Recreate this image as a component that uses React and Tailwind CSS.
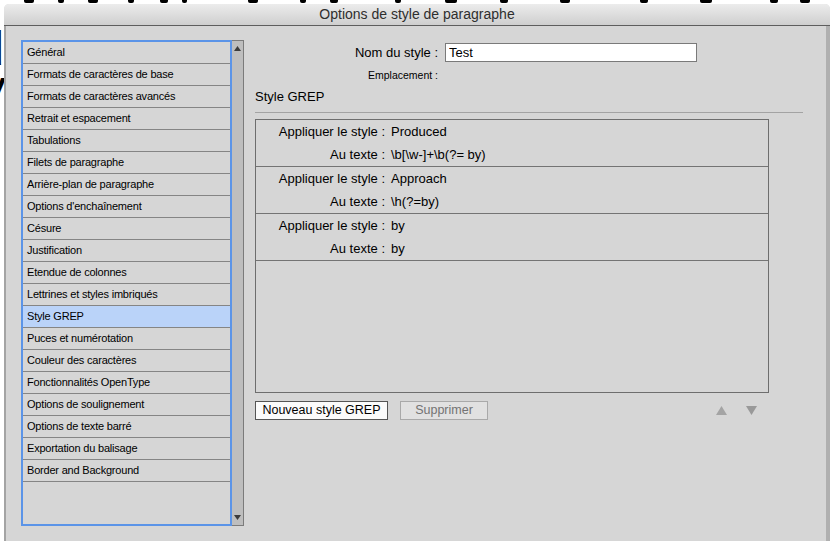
import React from 'react';

const sections = [
    'Général',
    'Formats de caractères de base',
    'Formats de caractères avancés',
    'Retrait et espacement',
    'Tabulations',
    'Filets de paragraphe',
    'Arrière-plan de paragraphe',
    "Options d'enchaînement",
    'Césure',
    'Justification',
    'Etendue de colonnes',
    'Lettrines et styles imbriqués',
    'Style GREP',
    'Puces et numérotation',
    'Couleur des caractères',
    'Fonctionnalités OpenType',
    'Options de soulignement',
    'Options de texte barré',
    'Exportation du balisage',
    'Border and Background',
];

const grepStyles = [
    { style: 'Produced', text: '\\b[\\w-]+\\b(?= by)' },
    { style: 'Approach', text: '\\h(?=by)' },
    { style: 'by', text: 'by' },
];

// bottoms of the big letters of the document behind the dialog
const strokes = [
    [24, 10], [58, 6], [88, 10], [128, 6], [160, 8], [182, 5], [248, 10],
    [300, 6], [330, 8], [395, 6], [445, 12], [500, 8], [560, 10], [640, 8],
    [700, 12], [770, 8], [800, 10],
];

const Triangle = ({ down, className }) => (
    <svg width="11" height="9" viewBox="0 0 11 9" className={className}>
        {down ? <path d="M0 0h11L5.5 9z" fill="currentColor" /> : <path d="M0 9h11L5.5 0z" fill="currentColor" />}
    </svg>
);

const App = () => {
    return (
        <div className="relative w-[830px] h-[541px] overflow-hidden bg-white font-['Liberation_Sans',Arial,sans-serif] text-black">
            {/* document behind the dialog, only its edges peek out */}
            <div className="absolute top-0 left-0 w-[830px] h-[4px] overflow-hidden">
                {strokes.map(([x, w]) => (
                    <div key={x} className="absolute top-0 h-[3px] bg-black rounded-b-[2px]" style={{ left: x, width: w }} />
                ))}
            </div>
            <div className="absolute left-0 top-[26px] w-[4px] h-[100px] overflow-hidden">
                <div className="ml-[-26px] w-[30px] text-right text-[48px] leading-[46px]">
                    d<br />V
                </div>
            </div>

            <div className="relative ml-[4px] mt-[4px] w-[826px] h-[537px] flex flex-col">
                <div className="h-[22px] rounded-t-[5px] bg-[#dcdcdc] bg-linear-to-b from-[#ececec] to-[#cfcfcf] border-b border-[#5e5e5e] flex items-center justify-center text-[14px] text-[#2e2e2e]">
                    Options de style de paragraphe
                </div>

                <div className="flex-1 flex bg-[#d6d6d6] border-l-2 border-r-4 border-l-[#a4a4a4] border-r-[#b0b0b0] pl-[15px] pt-[14px]">
                    {/* section list */}
                    <div className="flex h-[486px] w-[223px]">
                        <div className="w-[211px] h-full border-2 border-[#5b94e8] bg-[#d6d6d6]">
                            {sections.map((name) => (
                                <div
                                    key={name}
                                    className={`h-[22px] flex items-center pl-[4px] border-b border-[#858585] text-[11px] tracking-[-0.2px] ${name === 'Style GREP' ? 'bg-[#bad3f9]' : ''}`}
                                >
                                    {name}
                                </div>
                            ))}
                        </div>
                        <div className="w-[12px] h-full bg-[#bebebe] border-t border-b border-r border-[#7b7b7b] flex flex-col items-center justify-between py-[5px] text-[#3c3c3c]">
                            <svg width="7" height="5" viewBox="0 0 7 5"><path d="M0 5h7L3.5 0z" fill="currentColor" /></svg>
                            <svg width="7" height="5" viewBox="0 0 7 5"><path d="M0 0h7L3.5 5z" fill="currentColor" /></svg>
                        </div>
                    </div>

                    {/* right panel */}
                    <div className="ml-[11px] w-[548px] flex flex-col">
                        <div className="mt-[3px] flex items-center h-[19px]">
                            <span className="w-[183px] text-right text-[13px]">Nom du style :</span>
                            <input
                                type="text"
                                defaultValue="Test"
                                className="ml-[7px] w-[252px] h-[19px] bg-white border border-[#7a7a7a] px-[3px] text-[13px] outline-none"
                            />
                        </div>
                        <div className="mt-[7px] h-[14px] flex items-center">
                            <span className="w-[183px] text-right text-[10.5px]">Emplacement :</span>
                        </div>
                        <div className="mt-[6px] h-[16px] flex items-center text-[13px]">Style GREP</div>
                        <div className="mt-[7px] h-px bg-[#a3a3a3]" />

                        <div className="mt-[6px] w-[514px] h-[274px] border border-[#6e6e6e] text-[13px]">
                            {grepStyles.map((g) => (
                                <div key={g.style} className="pt-[2px] pb-[1px] border-b border-[#747474] flex flex-col gap-[3px]">
                                    <div className="h-[20px] flex items-center">
                                        <span className="w-[129px] text-right">Appliquer le style :</span>
                                        <span className="ml-[6px]">{g.style}</span>
                                    </div>
                                    <div className="h-[20px] flex items-center">
                                        <span className="w-[129px] text-right">Au texte :</span>
                                        <span className="ml-[6px]">{g.text}</span>
                                    </div>
                                </div>
                            ))}
                        </div>

                        <div className="mt-[8px] flex items-center h-[19px]">
                            <button className="w-[133px] h-[19px] bg-[#fbfbfb] border border-[#555] text-[12.5px] leading-none">
                                Nouveau style GREP
                            </button>
                            <button className="ml-[12px] w-[88px] h-[19px] bg-[#e1e1e1] border border-[#a9a9a9] text-[12.5px] leading-none text-[#737373]">
                                Supprimer
                            </button>
                            <Triangle className="ml-[228px] text-[#a4a4a4]" />
                            <Triangle down className="ml-[19px] text-[#999]" />
                        </div>
                    </div>
                </div>
            </div>
        </div>
    );
};

export default App;
